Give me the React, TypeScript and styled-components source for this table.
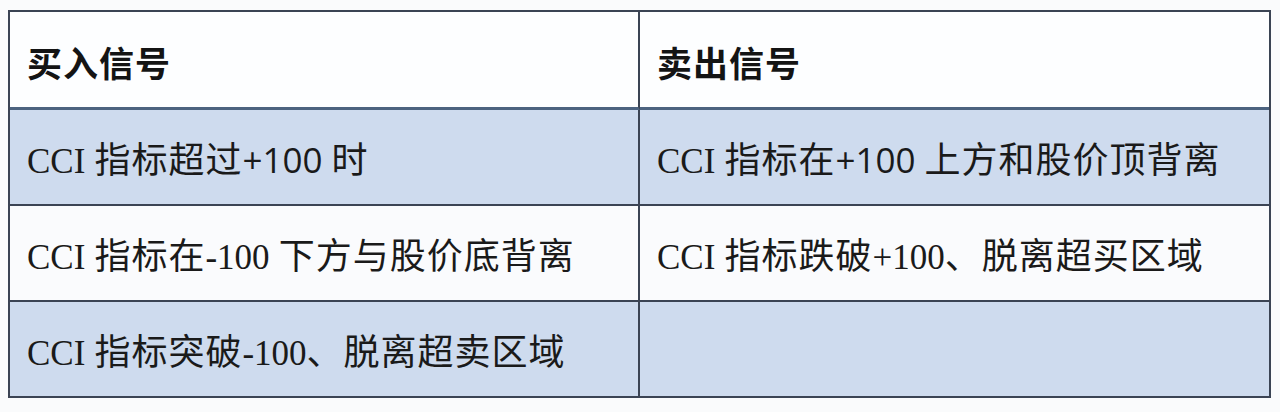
import styled, { createGlobalStyle } from 'styled-components';

const GlobalStyle = createGlobalStyle`
  html, body {
    margin: 0;
    padding: 0;
    background-color: #fafbfc;
  }
`;

const Page = styled.div`
  padding: 10px 0 0 8px;
  width: 1280px;
  height: 412px;
  box-sizing: border-box;
`;

const Table = styled.div`
  display: grid;
  grid-template-columns: 630px 629px;
  width: 1263px;
  border: 2px solid #3b4454;
  box-sizing: border-box;
`;

const HeaderCell = styled.div<{ $left?: boolean }>`
  display: flex;
  align-items: center;
  height: 98px;
  box-sizing: border-box;
  padding: 4px 18px 0 17px;
  background-color: #fdfeff;
  border-bottom: 3px solid #4c6380;
  border-right: ${(p) => (p.$left ? '2px solid #3b4454' : 'none')};
  font-family: 'Noto Sans CJK SC', 'Noto Sans', sans-serif;
  font-weight: 700;
  font-size: 35px;
  color: #141414;
  letter-spacing: 1px;
`;

const Cell = styled.div<{ $left?: boolean; $blue?: boolean; $last?: boolean }>`
  display: flex;
  align-items: center;
  height: ${(p) => (p.$last ? '94px' : '96px')};
  box-sizing: border-box;
  padding: 0 18px 0 17px;
  background-color: ${(p) => (p.$blue ? '#cedbee' : '#fafbfd')};
  border-bottom: ${(p) => (p.$last ? 'none' : '2px solid #3b4454')};
  border-right: ${(p) => (p.$left ? '2px solid #3b4454' : 'none')};
  font-family: 'Noto Sans CJK SC', 'Noto Sans', sans-serif;
  font-size: 36px;
  letter-spacing: 1px;
  color: #1a1a1a;
  white-space: pre;
`;

const Line = styled.span`
  display: inline-block;
`;

const Latin = styled.span<{ $serif?: boolean }>`
  font-family: ${(p) =>
    p.$serif ? "'Liberation Serif', 'DejaVu Serif', serif" : "'Open Sans', 'Noto Sans', sans-serif"};
  font-size: ${(p) => (p.$serif ? '35px' : '35px')};
  letter-spacing: 0;
`;

type Part = { t: string; serif?: boolean; latin?: boolean };

const rows: { left: Part[]; right: Part[] }[] = [
  {
    left: [
      { t: 'CCI', serif: true },
      { t: ' 指标超过' },
      { t: '+100', latin: true },
      { t: ' 时' },
    ],
    right: [
      { t: 'CCI', serif: true },
      { t: ' 指标在' },
      { t: '+100', latin: true },
      { t: ' 上方和股价顶背离' },
    ],
  },
  {
    left: [
      { t: 'CCI', serif: true },
      { t: ' 指标在' },
      { t: '-100', serif: true },
      { t: ' 下方与股价底背离' },
    ],
    right: [
      { t: 'CCI', serif: true },
      { t: ' 指标跌破' },
      { t: '+100', serif: true },
      { t: '、脱离超买区域' },
    ],
  },
  {
    left: [
      { t: 'CCI', serif: true },
      { t: ' 指标突破' },
      { t: '-100', serif: true },
      { t: '、脱离超卖区域' },
    ],
    right: [],
  },
];

const renderParts = (parts: Part[]) => (
  <Line>
    {parts.map((p, i) =>
      p.serif || p.latin ? (
        <Latin key={i} $serif={p.serif}>
          {p.t}
        </Latin>
      ) : (
        <span key={i}>{p.t}</span>
      )
    )}
  </Line>
);

export default function App() {
  return (
    <>
      <GlobalStyle />
      <Page>
        <Table>
          <HeaderCell $left>买入信号</HeaderCell>
          <HeaderCell>卖出信号</HeaderCell>
          {rows.map((r, i) => (
            <>
              <Cell key={`l${i}`} $left $blue={i % 2 === 0} $last={i === rows.length - 1}>
                {renderParts(r.left)}
              </Cell>
              <Cell key={`r${i}`} $blue={i % 2 === 0} $last={i === rows.length - 1}>
                {renderParts(r.right)}
              </Cell>
            </>
          ))}
        </Table>
      </Page>
    </>
  );
}
